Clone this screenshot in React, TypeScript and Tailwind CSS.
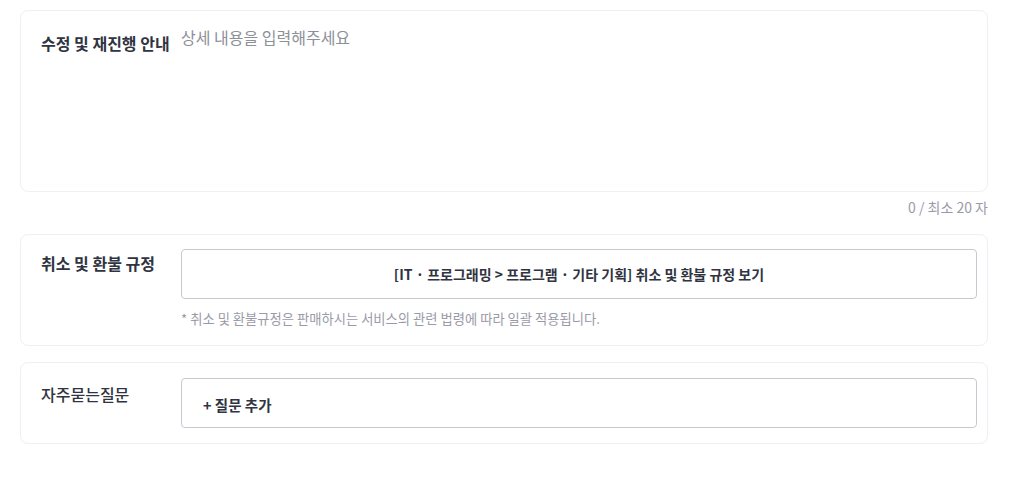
import React from "react";

const font = { fontFamily: '"Noto Sans CJK KR", "Noto Sans", sans-serif' };

export default function App() {
  return (
    <div className="bg-white w-[1026px] h-[481px] pt-[10px] pl-[20px] pr-[38px] text-[#303441]" style={font}>
      <div className="flex items-start border border-[#f0f0f2] rounded-[8px] h-[182px] px-[20px] pt-[14px]">
        <div className="w-[140px] shrink-0 text-[16px] font-bold leading-[24px] mt-[6px]">수정 및 재진행 안내</div>
        <div className="text-[16px] leading-[24px] text-[#8d8f99]">상세 내용을 입력해주세요</div>
      </div>
      <div className="flex justify-end mt-[6px] mb-[18px] text-[14px] leading-[18px] text-[#9a9ba7]">0 / 최소 20 자</div>
      <div className="flex border border-[#f0f0f2] rounded-[8px] h-[112px] pl-[20px] pr-[10px] pt-[14px]">
        <div className="w-[140px] shrink-0 text-[16px] font-bold leading-[24px] pt-[2px]">취소 및 환불 규정</div>
        <div className="flex-1 flex flex-col">
          <div className="h-[50px] border border-[#c8c9d0] rounded-[4px] flex items-center justify-center text-[14px] font-bold">
            [IT · 프로그래밍 &gt; 프로그램 · 기타 기획] 취소 및 환불 규정 보기
          </div>
          <div className="mt-[11px] text-[13.3px] leading-[18px] text-[#9a9ba7]">
            * 취소 및 환불규정은 판매하시는 서비스의 관련 법령에 따라 일괄 적용됩니다.
          </div>
        </div>
      </div>
      <div className="flex border border-[#f0f0f2] rounded-[8px] h-[82px] mt-[16px] pl-[20px] pr-[10px] pt-[15px]">
        <div className="w-[140px] shrink-0 text-[16px] font-medium leading-[24px] pt-[4px]">자주묻는질문</div>
        <div className="flex-1 h-[50px] border border-[#c8c9d0] rounded-[4px] flex items-center pl-[21px] pt-[3px] text-[14.5px] font-bold">
          + 질문 추가
        </div>
      </div>
    </div>
  );
}
